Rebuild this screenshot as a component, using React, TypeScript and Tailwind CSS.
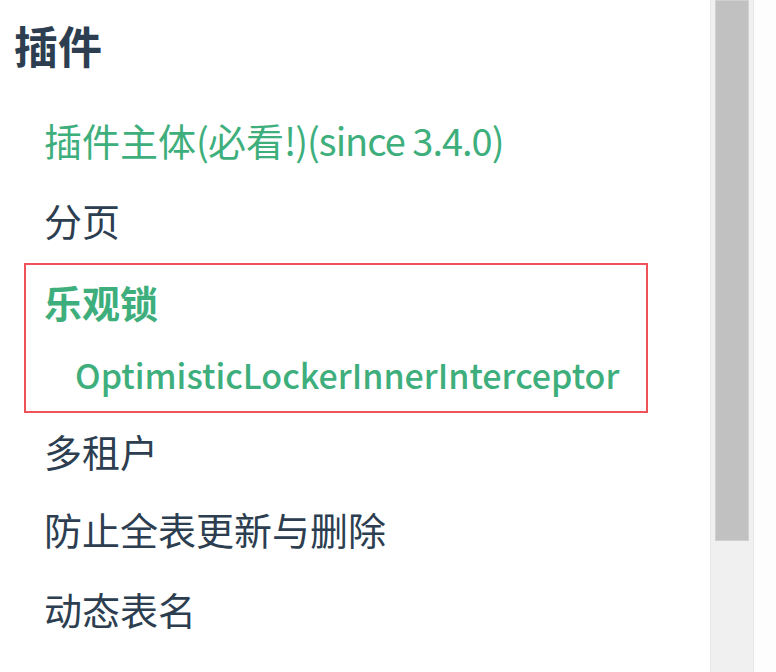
import React from 'react';

const font = { fontFamily: '"Noto Sans CJK SC", "Noto Sans", sans-serif' };

const items = ['多租户', '防止全表更新与删除', '动态表名'];

export default function App() {
  return (
    <div className="flex w-[776px] h-[672px] bg-white overflow-hidden" style={font}>
      {/* Sidebar content */}
      <div className="flex-1 flex flex-col">
        <h2 className="h-[90px] pl-[14px] leading-[90px] text-[44px] font-bold text-[#2c3e50]">插件</h2>

        <div className="mt-[10px] pl-[44px] h-[80px] leading-[80px] text-[38px] text-[#3eaf7c] whitespace-nowrap">
          插件主体<span className="tracking-[-1px]">(</span>必看<span className="tracking-[-1px]">!)(since 3.4.0)</span>
        </div>
        <div className="pl-[44px] h-[80px] leading-[80px] text-[38px] text-[#2c3e50]">分页</div>

        {/* Highlighted active group */}
        <div className="ml-[24px] mt-[3px] w-[624px] border-2 border-[#ef5257] flex flex-col">
          <div className="pl-[18px] h-[74px] leading-[74px] text-[38px] font-bold text-[#3eaf7c]">乐观锁</div>
          <div className="pl-[49px] h-[72px] leading-[72px] text-[34px] font-medium text-[#3eaf7c] whitespace-nowrap">
            OptimisticLockerInnerInterceptor
          </div>
        </div>

        <div className="pl-[44px] h-[76px] leading-[76px] text-[38px] text-[#2c3e50]">{items[0]}</div>
        {items.slice(1).map((t) => (
          <div key={t} className="pl-[44px] h-[80px] leading-[80px] text-[38px] text-[#2c3e50] whitespace-nowrap">
            {t}
          </div>
        ))}
      </div>

      {/* Scrollbar */}
      <div className="w-[44px] h-full bg-[#f0f0f0] border-x border-[#e8e8e8] flex flex-col items-center">
        <div className="w-[34px] h-[541px] bg-[#c1c1c1] border border-[#d0d0d0]" />
      </div>
      <div className="w-[22px] h-full bg-[#fdfdfd]" />
    </div>
  );
}
